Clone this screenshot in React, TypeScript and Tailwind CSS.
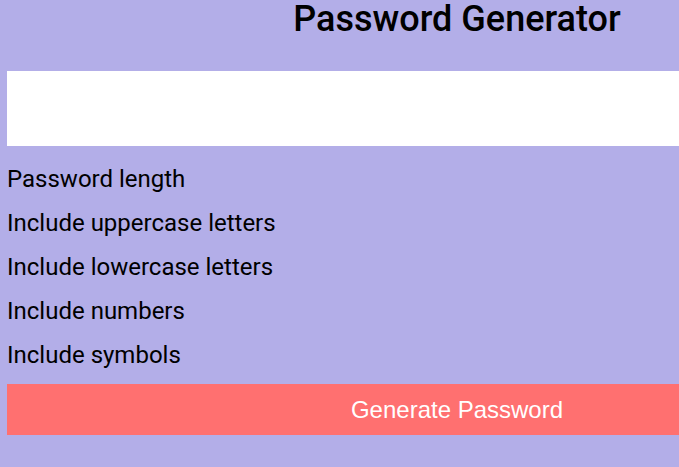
import React from "react";

export default function App() {
  const labels = [
    "Password length",
    "Include uppercase letters",
    "Include lowercase letters",
    "Include numbers",
    "Include symbols",
  ];
  return (
    <div className="min-h-[467px] w-[907px] bg-[#b3aee8] pl-[7px] pb-[32px] font-['Roboto',sans-serif] text-black">
      <div className="w-[900px]">
        <h1 className="mt-[-2px] text-center text-[36px] leading-[42px] font-medium">
          Password Generator
        </h1>
        <input
          type="text"
          readOnly
          className="mt-[31px] block h-[75px] w-full border-0 bg-white outline-none"
        />
        <div className="mt-[19px] flex flex-col gap-4">
          {labels.map((l) => (
            <label key={l} className="block text-[24px] leading-[28px]">
              {l}
            </label>
          ))}
        </div>
        <button className="mt-[15px] block h-[51px] w-full bg-[#ff7070] font-['Liberation_Sans',Arial,sans-serif] text-[24px] text-white">
          Generate Password
        </button>
      </div>
    </div>
  );
}
